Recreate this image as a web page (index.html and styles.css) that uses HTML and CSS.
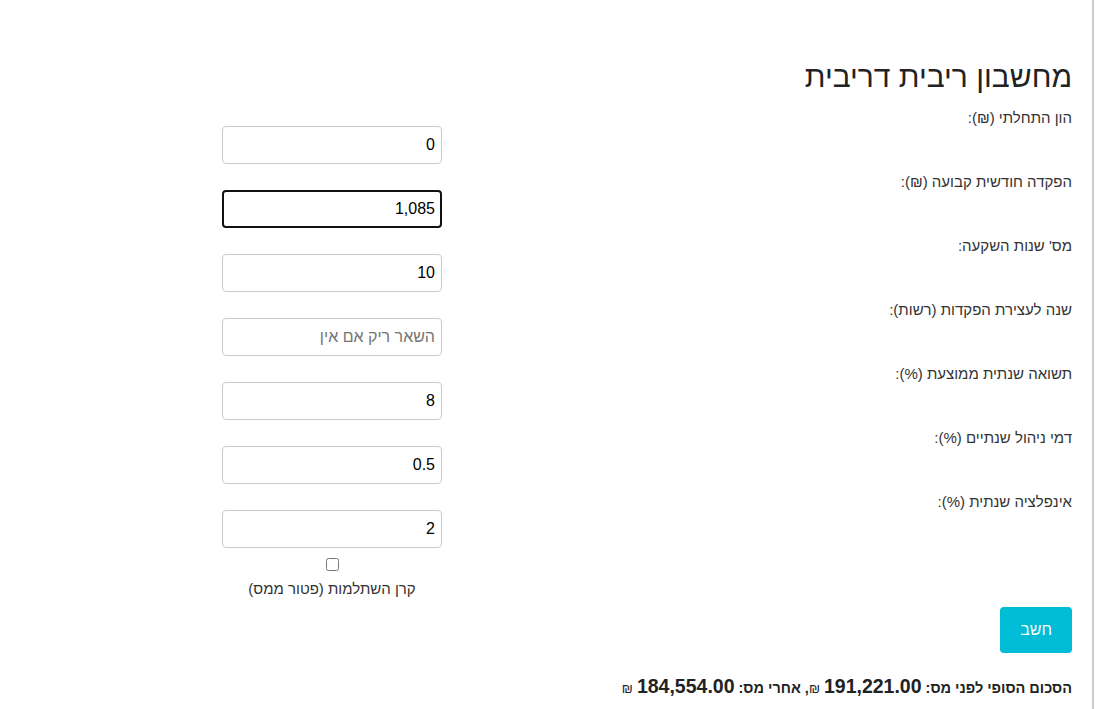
FILE: index.html
```html
<!DOCTYPE html>
<html lang="he" dir="rtl">
<head>
    <meta charset="UTF-8">
    <meta name="viewport" content="width=device-width, initial-scale=1.0">
    <title>מחשבון ריבית דריבית</title>
    <link rel="stylesheet" href="styles.css">
</head>
<body>

    <div class="page">
        <div class="calculator">
            <h1>מחשבון ריבית דריבית</h1>

            <form class="calc-form" onsubmit="return false;">
                <div class="form-row">
                    <label for="initial">הון התחלתי (₪):</label>
                    <input type="text" id="initial" class="input-field" value="0">
                </div>
                <div class="form-row">
                    <label for="monthly">הפקדה חודשית קבועה (₪):</label>
                    <input type="text" id="monthly" class="input-field focused" value="1,085">
                </div>
                <div class="form-row">
                    <label for="years">מס' שנות השקעה:</label>
                    <input type="text" id="years" class="input-field" value="10">
                </div>
                <div class="form-row">
                    <label for="stopYear">שנה לעצירת הפקדות (רשות):</label>
                    <input type="text" id="stopYear" class="input-field" placeholder="השאר ריק אם אין">
                </div>
                <div class="form-row">
                    <label for="returnRate">תשואה שנתית ממוצעת (%):</label>
                    <input type="text" id="returnRate" class="input-field" value="8">
                </div>
                <div class="form-row">
                    <label for="fee">דמי ניהול שנתיים (%):</label>
                    <input type="text" id="fee" class="input-field" value="0.5">
                </div>
                <div class="form-row">
                    <label for="inflation">אינפלציה שנתית (%):</label>
                    <input type="text" id="inflation" class="input-field" value="2">
                </div>

                <div class="checkbox-row">
                    <div class="checkbox-box">
                        <input type="checkbox" id="taxFree">
                        <label for="taxFree">קרן השתלמות (פטור ממס)</label>
                    </div>
                </div>

                <button class="btn" type="button">חשב</button>
            </form>

            <p class="result">הסכום הסופי לפני מס: <span class="amount">191,221.00</span> <span class="shekel">₪</span>, אחרי מס: <span class="amount">184,554.00</span> <span class="shekel">₪</span></p>
        </div>
    </div>

</body>
</html>
```

FILE: styles.css
```css
body {
    font-family: "Liberation Sans", Arial, sans-serif;
    margin: 0;
    background-color: #fff;
    color: #333;
}
.page {
    width: 1094px;
    min-height: 709px;
    box-sizing: border-box;
    margin-right: 4px;
    border-right: 2px solid #ccc;
    padding: 58px 20px 0 0;
}
.calculator {
    width: 850px;
}
.calculator h1 {
    font-size: 30px;
    font-weight: normal;
    color: #222;
    margin: 0 0 15px;
    line-height: 37px;
}
.form-row {
    display: flex;
    justify-content: space-between;
    align-items: flex-start;
    height: 64px;
}
.form-row label {
    font-size: 15px;
    line-height: 17px;
    margin-top: -1px;
}
.input-field {
    width: 220px;
    height: 38px;
    box-sizing: border-box;
    margin-top: 16px;
    padding: 6px 6px;
    font-family: "Liberation Sans", Arial, sans-serif;
    font-size: 16px;
    color: #000;
    border: 1px solid #ccc;
    border-radius: 4px;
    outline: none;
}
.input-field::placeholder {
    color: #757575;
}
.focused {
    border: 2px solid #111;
    padding: 5px 5px;
}
.checkbox-row {
    display: flex;
    justify-content: flex-end;
    margin-top: 0;
}
.checkbox-box {
    width: 220px;
    text-align: center;
    font-size: 15px;
}
.checkbox-box input {
    display: block;
    margin: 0 auto 9px;
    width: 13px;
    height: 13px;
}
.btn {
    display: block;
    margin-top: 10px;
    background-color: #00bcd4;
    color: white;
    border: none;
    padding: 0 20px;
    height: 46px;
    font-family: "Liberation Sans", Arial, sans-serif;
    font-size: 16px;
    border-radius: 4px;
    cursor: pointer;
}
.result {
    font-size: 14.5px;
    font-weight: bold;
    color: #222;
    margin: 22px 0 0;
}
.result .amount {
    font-size: 19.5px;
}
.result .shekel {
    font-weight: normal;
    font-size: 13px;
}
```
